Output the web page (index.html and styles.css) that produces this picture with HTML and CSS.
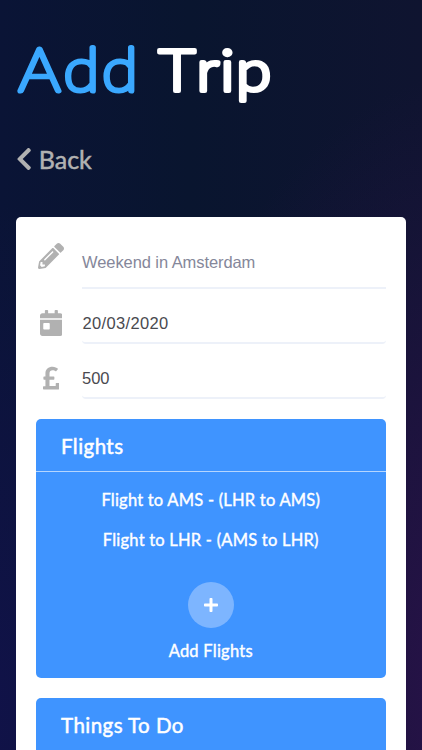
FILE: index.html
```html
<!DOCTYPE html>
<html lang="en">
<head>
<meta charset="utf-8">
<title>Add Trip</title>
<link rel="stylesheet" href="styles.css">
</head>
<body>
<main class="page">
  <h1 class="title">
    <svg class="title-art" width="300" height="90" viewBox="0 0 300 90">
      <text class="word word-add" transform="scale(1.1 1)" x="2.4 43.4 78.4" y="59">Add</text>
      <text class="word word-trip" transform="scale(1.1 1)" x="129.5 164 185.6 200" y="59.5">Trip</text>
    </svg>
  </h1>
  <a class="back">
    <svg class="back-icon" viewBox="0 0 320 512"><path d="M34.52 239.03L228.87 44.69c9.37-9.37 24.57-9.37 33.94 0l22.67 22.67c9.36 9.36 9.37 24.52.04 33.9L131.49 256l154.02 154.75c9.34 9.38 9.32 24.54-.04 33.9l-22.67 22.67c-9.37 9.37-24.57 9.37-33.94 0L34.52 272.97c-9.37-9.37-9.37-24.57 0-33.94z"/></svg>
    <span class="back-label">Back</span>
  </a>
  <section class="card">
    <div class="field field-name">
      <svg class="icon" viewBox="0 0 512 512"><path d="M497.9 142.1l-46.1 46.1c-4.7 4.7-12.3 4.7-17 0l-111-111c-4.7-4.7-4.7-12.3 0-17l46.1-46.1c18.7-18.7 49.1-18.7 67.9 0l60.1 60.1c18.8 18.7 18.8 49.1 0 67.9zM284.2 99.8L21.6 362.4.4 483.9c-2.9 16.4 11.4 30.6 27.8 27.8l121.5-21.3 262.6-262.6c4.7-4.7 4.7-12.3 0-17l-111-111c-4.8-4.7-12.4-4.7-17.1 0zM124.1 339.9c-5.5-5.5-5.5-14.3 0-19.8l154-154c5.5-5.5 14.3-5.5 19.8 0s5.5 14.3 0 19.8l-154 154c-5.5 5.5-14.3 5.5-19.8 0zM88 424h48v36.3l-64.5 11.3-31.1-31.1L51.7 376H88v48z"/></svg>
      <div class="value placeholder"><span class="name-text">Weekend in Amsterdam</span></div>
    </div>
    <div class="field">
      <svg class="icon" viewBox="0 0 448 512"><path d="M0 464c0 26.5 21.5 48 48 48h352c26.5 0 48-21.5 48-48V192H0v272zm64-192c0-8.8 7.2-16 16-16h96c8.8 0 16 7.2 16 16v96c0 8.8-7.2 16-16 16H80c-8.8 0-16-7.2-16-16v-96zM400 64h-48V16c0-8.8-7.2-16-16-16h-32c-8.8 0-16 7.2-16 16v48H160V16c0-8.8-7.2-16-16-16h-32c-8.8 0-16 7.2-16 16v48H48C21.5 64 0 85.5 0 112v48h448v-48c0-26.5-21.5-48-48-48z"/></svg>
      <div class="value"><span class="date-text">20/03/2020</span></div>
    </div>
    <div class="field">
      <svg class="icon" viewBox="0 0 320 512"><path d="M308 352h-45.495c-6.627 0-12 5.373-12 12v50.848H128V288h84c6.627 0 12-5.373 12-12v-40c0-6.627-5.373-12-12-12h-84v-63.556c0-32.266 24.562-57.086 61.792-57.086 23.658 0 45.878 11.505 57.652 18.849 5.151 3.213 11.888 2.051 15.688-2.685l28.493-35.513c4.233-5.276 3.279-13.005-2.119-17.081C273.124 54.56 236.576 32 187.931 32 106.026 32 48 84.742 48 157.961V224H20c-6.627 0-12 5.373-12 12v40c0 6.627 5.373 12 12 12h28v128H12c-6.627 0-12 5.373-12 12v40c0 6.627 5.373 12 12 12h296c6.627 0 12-5.373 12-12V364c0-6.627-5.373-12-12-12z"/></svg>
      <div class="value">500</div>
    </div>
    <section class="panel">
      <h2 class="panel-title">Flights</h2>
      <ul class="flights">
        <li>Flight to AMS - (LHR to AMS)</li>
        <li>Flight to LHR - (AMS to LHR)</li>
      </ul>
      <div class="add">
        <span class="add-button"><svg class="plus" viewBox="0 0 448 512"><path d="M416 208H272V64c0-17.67-14.33-32-32-32h-32c-17.67 0-32 14.33-32 32v144H32c-17.67 0-32 14.33-32 32v32c0 17.67 14.33 32 32 32h144v144c0 17.67 14.33 32 32 32h32c17.67 0 32-14.33 32-32V304h144c17.67 0 32-14.33 32-32v-32c0-17.67-14.33-32-32-32z"/></svg></span>
        <span class="add-label">Add Flights</span>
      </div>
    </section>
    <section class="panel">
      <h2 class="panel-title">Things To Do</h2>
    </section>
  </section>
</main>
</body>
</html>
```
FILE: styles.css
```css
* { box-sizing: border-box; }
html, body { margin: 0; height: 100%; overflow: hidden; }
body { font-family: Lato, "Open Sans", sans-serif; background: #0b1433; }
.page {
  height: 750px;
  padding: 32px 16px 0 15.5px;
  overflow: hidden;
  background:
    radial-gradient(ellipse 360px 620px at 115% 92%, #29124a 0%, rgba(41, 18, 74, 0) 100%),
    radial-gradient(ellipse 300px 520px at -8% 96%, #11124a 0%, rgba(17, 18, 74, 0) 100%),
    linear-gradient(90deg, #0a1436 0%, #09152f 45%, #0f1430 100%);
}
.title { margin: 0; height: 90px; }
.title-art { display: block; overflow: visible; }
.word { font-family: Lato, sans-serif; stroke-linejoin: round; stroke-linecap: round; }
.word-add { font-size: 59px; font-weight: 100; fill: #3aa8ff; stroke: #3aa8ff; stroke-width: 5.1px; }
.word-trip { font-size: 58px; font-weight: 300; fill: #fff; stroke: #fff; stroke-width: 4.2px; }
.back { display: flex; align-items: center; gap: 7px; height: 30px; margin-top: 22px; color: #b1b1b1; }
.back-icon { width: 16.25px; height: 26px; fill: #b1b1b1; }
.back-label { font-size: 25px; -webkit-text-stroke: 0.5px #b1b1b1; line-height: 30px; }
.card { margin-top: 43px; height: 560px; padding: 16px 20.5px; background: #fff; border-radius: 5px; }
.field { display: grid; grid-template-columns: 30px 304px; column-gap: 16px; height: 55px; align-items: end; }
.field-name { height: 56px; }
.field .icon { justify-self: center; align-self: end; height: 26px; fill: #b1b1b1; margin-bottom: 8px; }
.field-name .icon { margin-bottom: 20px; }
.value { height: 39px; line-height: 36px; border-bottom: 2px solid #edf1f9; border-radius: 4px; font-family: "Liberation Sans", Arial, sans-serif; font-size: 16.5px; color: #4a4a4f; }
.placeholder { height: 52px; line-height: 51px; border-radius: 0; color: #85879a; letter-spacing: -0.08px; }
.date-text { letter-spacing: 0.35px; padding-left: 0.5px; }
.panel { margin-top: 20px; height: 259px; background: #3f94ff; color: #fff; border-radius: 5px; }
.panel-title { margin: 0; height: 53px; padding: 0 25px; border-bottom: 1px solid #b5d6ff; font-size: 20.5px; font-weight: 400; line-height: 55px; letter-spacing: 0.45px; -webkit-text-stroke: 0.5px #fff; }
.flights { margin: 0; padding: 8px 0 1px; list-style: none; text-align: center; font-size: 16.5px; letter-spacing: 0.22px; line-height: 40px; -webkit-text-stroke: 0.4px #fff; }
.add { display: flex; flex-direction: column; align-items: center; margin-top: 21px; }
.add-button { display: flex; align-items: center; justify-content: center; width: 46px; height: 46px; border-radius: 50%; background: #7db5ff; }
.plus { width: 14px; height: 16px; fill: #fff; }
.add-label { margin-top: 11px; font-size: 16.5px; letter-spacing: 0.25px; line-height: 24px; -webkit-text-stroke: 0.4px #fff; }
```
